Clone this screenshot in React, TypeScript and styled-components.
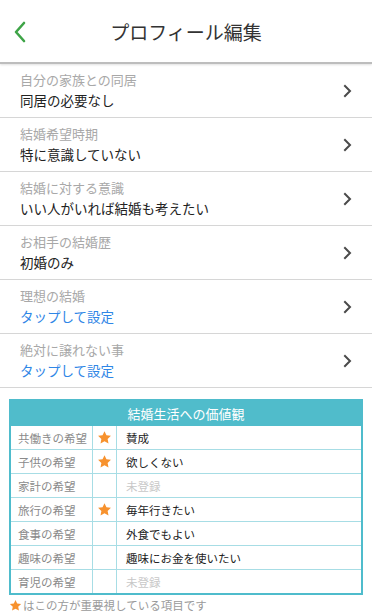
import React from 'react'
import styled, { createGlobalStyle } from 'styled-components'

const GlobalStyle = createGlobalStyle`
  html, body {
    margin: 0;
    padding: 0;
    background: #fff;
  }
  body {
    font-family: "Noto Sans CJK JP", "Noto Sans", sans-serif;
    color: #222;
  }
`

type Item = {
  label: string
  value: string
  unset?: boolean
}

const items: Item[] = [
  { label: '自分の家族との同居', value: '同居の必要なし' },
  { label: '結婚希望時期', value: '特に意識していない' },
  { label: '結婚に対する意識', value: 'いい人がいれば結婚も考えたい' },
  { label: 'お相手の結婚歴', value: '初婚のみ' },
  { label: '理想の結婚', value: 'タップして設定', unset: true },
  { label: '絶対に譲れない事', value: 'タップして設定', unset: true },
]

type ValueRow = {
  label: string
  star: boolean
  value: string
}

const values: ValueRow[] = [
  { label: '共働きの希望', star: true, value: '賛成' },
  { label: '子供の希望', star: true, value: '欲しくない' },
  { label: '家計の希望', star: false, value: '' },
  { label: '旅行の希望', star: true, value: '毎年行きたい' },
  { label: '食事の希望', star: false, value: '外食でもよい' },
  { label: '趣味の希望', star: false, value: '趣味にお金を使いたい' },
  { label: '育児の希望', star: false, value: '' },
]

const Star = ({ size = 15 }: { size?: number }) => (
  <svg width={size} height={size} viewBox="0 0 24 24">
    <path
      d="M12 1.8l3.1 6.6 7.2.9-5.3 5 1.4 7.1L12 17.9l-6.4 3.5 1.4-7.1-5.3-5 7.2-.9z"
      fill="#f7922e"
    />
  </svg>
)

const App = () => (
  <Page>
    <GlobalStyle />
    <Header>
      <BackButton>
        <svg width="14" height="22" viewBox="0 0 14 22">
          <path d="M11 2L3 11l8 9" fill="none" stroke="#3ea447" strokeWidth="2.6" strokeLinecap="round" strokeLinejoin="round" />
        </svg>
      </BackButton>
      <Title>プロフィール編集</Title>
    </Header>

    <List>
      {items.map((item, i) => (
        <Row key={`${item.label}_${i}`}>
          <RowText>
            <RowLabel>{item.label}</RowLabel>
            <RowValue $unset={item.unset}>{item.value}</RowValue>
          </RowText>
          <svg width="9" height="14" viewBox="0 0 9 14">
            <path d="M2 2l5 5-5 5" fill="none" stroke="#4a4a4a" strokeWidth="2" strokeLinecap="square" />
          </svg>
        </Row>
      ))}
    </List>

    <Card>
      <CardTitle>結婚生活への価値観</CardTitle>
      <Table>
        <tbody>
          {values.map((v, i) => (
            <tr key={`${v.label}_${i}`}>
              <LabelCell>{v.label}</LabelCell>
              <StarCell>{v.star && <Star />}</StarCell>
              <ValueCell $empty={!v.value}>{v.value || '未登録'}</ValueCell>
            </tr>
          ))}
        </tbody>
      </Table>
    </Card>
    <Note>
      <Star size={13} />
      はこの方が重要視している項目です
    </Note>
  </Page>
)

export default App

const Page = styled.div`
  width: 372px;
  height: 616px;
  overflow: hidden;
  background: #fff;
`

const Header = styled.header`
  position: relative;
  display: flex;
  align-items: center;
  justify-content: center;
  height: 62px;
  border-bottom: 2px solid #bdbdbd;
  box-shadow: 0 1px 2px rgba(0, 0, 0, 0.12);
`

const BackButton = styled.div`
  position: absolute;
  left: 13px;
  top: 21px;
  display: flex;
`

const Title = styled.h1`
  margin: 0;
  font-size: 19px;
  font-weight: 400;
  color: #333;
`

const List = styled.ul`
  list-style: none;
  margin: 0;
  padding: 0;
`

const Row = styled.li`
  display: flex;
  align-items: center;
  justify-content: space-between;
  height: 53px;
  padding: 0 20px 0 20px;
  border-bottom: 1px solid #d6d6d6;
`

const RowText = styled.div`
  display: flex;
  flex-direction: column;
  gap: 2px;
`

const RowLabel = styled.span`
  font-size: 13px;
  line-height: 18px;
  color: #a8a8a8;
`

const RowValue = styled.span<{ $unset?: boolean }>`
  font-size: 13.5px;
  line-height: 19px;
  color: ${({ $unset }) => ($unset ? '#2f86e6' : '#222')};
`

const Card = styled.section`
  margin: 11px 9px 0 9px;
  border: 2px solid #4fbccc;
`

const CardTitle = styled.div`
  height: 25px;
  display: flex;
  align-items: center;
  justify-content: center;
  background: #50bccb;
  color: #fff;
  font-size: 13px;
`

const Table = styled.table`
  width: 100%;
  border-collapse: collapse;
  table-layout: fixed;

  & td {
    height: 23px;
    padding: 0;
    border: 1px solid #a7dde5;
    font-size: 11.5px;
  }
  & tr:first-child td {
    border-top: none;
  }
  & tr:last-child td {
    border-bottom: none;
  }
  & td:first-child {
    border-left: none;
  }
  & td:last-child {
    border-right: none;
  }
`

const LabelCell = styled.td`
  width: 74px;
  padding-left: 7px !important;
  color: #8a8a8a;
`

const StarCell = styled.td`
  width: 23px;
  text-align: center;
  line-height: 0;
`

const ValueCell = styled.td<{ $empty?: boolean }>`
  padding-left: 9px !important;
  color: ${({ $empty }) => ($empty ? '#c8c8c8' : '#222')};
`

const Note = styled.p`
  display: flex;
  align-items: center;
  gap: 1px;
  margin: 2px 0 0 9px;
  font-size: 11.5px;
  color: #9a9a9a;
`
